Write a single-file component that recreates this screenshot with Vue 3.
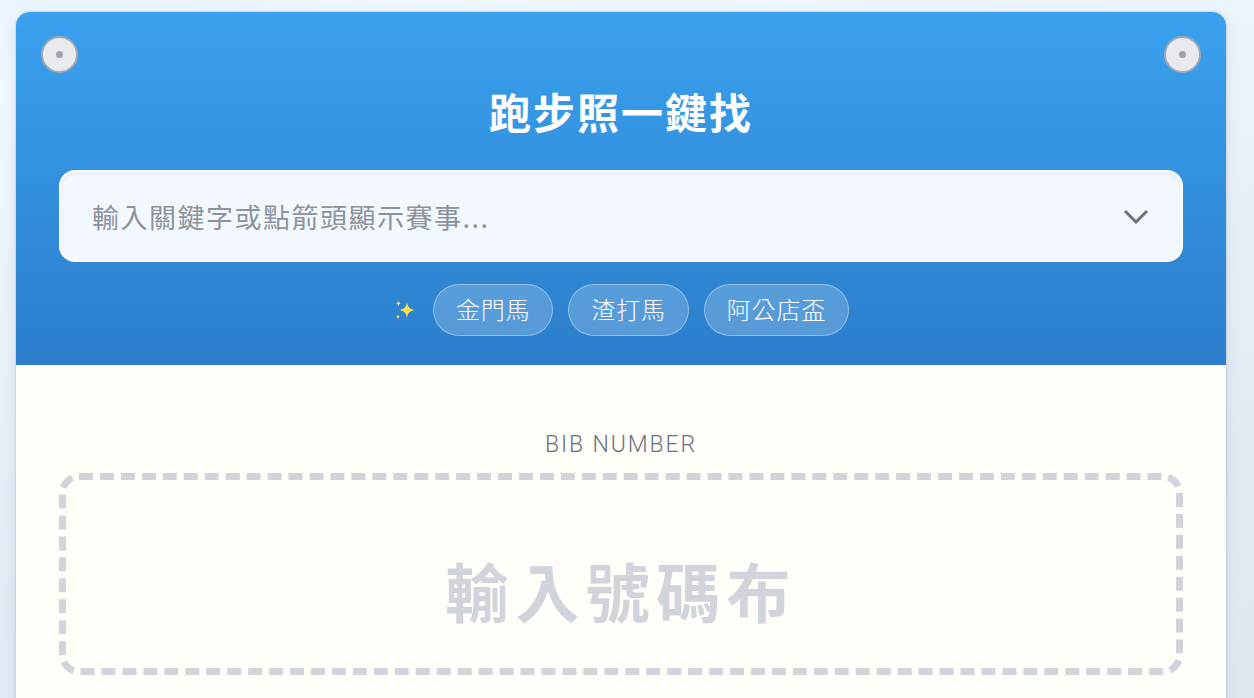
<template>
  <div class="page">
    <div class="card">
      <header class="head">
        <div class="holes">
          <span class="hole"><i></i></span>
          <span class="hole"><i></i></span>
        </div>
        <h1 class="title">跑步照一鍵找</h1>
        <div class="search">
          <input class="search-input" type="text" placeholder="輸入關鍵字或點箭頭顯示賽事..." />
          <svg class="chevron" width="26" height="16" viewBox="0 0 26 16" fill="none">
            <path d="M2 3l11 11L24 3" stroke="#6b7280" stroke-width="3" />
          </svg>
        </div>
        <div class="quick">
          <svg class="spark" width="24" height="24" viewBox="-1 0 24 24">
            <path d="M14 4c.8 5 2.500 7 7.500 8-5 1-6.700 3-7.500 8-.8-5-2.500-7-7.500-8 5-1 6.700-3 7.500-8z" fill="#fde047" />
            <path d="M5.500 2.500c.3 2 .9 2.700 2.500 3-1.600.3-2.200 1-2.500 3-.3-2-.9-2.700-2.500-3 1.600-.3 2.200-1 2.500-3z" fill="#fef3c7" />
            <path d="M5 16c.3 1.800.8 2.400 2.300 2.700-1.500.3-2 .9-2.300 2.700-.3-1.800-.8-2.400-2.300-2.700 1.500-.3 2-.9 2.300-2.700z" fill="#fde047" />
          </svg>
          <button v-for="tag in tags" :key="tag" class="pill">{{ tag }}</button>
        </div>
      </header>
      <section class="body">
        <div class="bib-label">BIB NUMBER</div>
        <div class="bib-box">輸入號碼布</div>
      </section>
    </div>
  </div>
</template>

<script setup>
const tags = ['金門馬', '渣打馬', '阿公店盃']
</script>

<style>
html, body {
  margin: 0;
  height: 100%;
  overflow: hidden;
}
</style>

<style scoped>
.page {
  height: 698px;
  box-sizing: border-box;
  padding: 12px 28px 0 16px;
  overflow: hidden;
  background: linear-gradient(170deg, #eaf5ff 0%, #f0f7fe 10%, #e2eaf3 70%, #dfe7f0 100%);
  font-family: "Noto Sans CJK TC", "Noto Sans", sans-serif;
}

.card {
  height: 800px;
  border-radius: 14px;
  overflow: hidden;
  background: #fffef9;
  box-shadow: 0 0 2px rgba(90, 110, 140, 0.45), 0 4px 14px rgba(110, 135, 165, 0.18);
}

.head {
  position: relative;
  height: 353px;
  box-sizing: border-box;
  padding: 0 43px;
  background: linear-gradient(180deg, #3aa1ee 0%, #2b7ecb 100%);
}

.holes {
  position: absolute;
  top: 24px;
  left: 25px;
  right: 25px;
  display: flex;
  justify-content: space-between;
}

.hole {
  width: 37px;
  height: 37px;
  box-sizing: border-box;
  border: 2px solid #a3a8b0;
  border-radius: 50%;
  background: #e8eaee;
  display: flex;
  align-items: center;
  justify-content: center;
}

.hole i {
  width: 7px;
  height: 7px;
  border-radius: 50%;
  background: #9ca3af;
}

.title {
  margin: 0;
  padding-top: 70px;
  height: 158px;
  box-sizing: border-box;
  line-height: 58px;
  font-size: 42px;
  font-weight: 700;
  letter-spacing: 2px;
  color: #fff;
  text-align: center;
}

.search {
  height: 92px;
  box-sizing: border-box;
  display: flex;
  align-items: center;
  padding: 0 32px 0 31px;
  border: 2px solid #fff;
  border-radius: 16px;
  background: #f3f8ff;
  box-shadow: inset 0 2px 4px rgba(0, 0, 0, 0.06);
}

.search-input {
  flex: 1;
  border: none;
  outline: none;
  background: transparent;
  padding: 0;
  font-family: inherit;
  font-size: 27px;
  font-weight: 400;
  letter-spacing: 1.500px;
  color: #374151;
}

.search-input::placeholder {
  color: #8d939d;
  opacity: 1;
}

.quick {
  display: flex;
  align-items: center;
  justify-content: center;
  gap: 15px;
  margin-top: 22px;
  padding-right: 1px;
}

.spark {
  margin-right: 2px;
}

.pill {
  height: 52px;
  box-sizing: border-box;
  padding: 0 22px 4px;
  border: 1px solid rgba(255, 255, 255, 0.35);
  border-radius: 26px;
  background: rgba(255, 255, 255, 0.2);
  font-family: inherit;
  font-size: 24px;
  font-weight: 300;
  letter-spacing: 0.800px;
  color: #fff;
}

.body {
  padding: 60px 43px 0;
}

.bib-label {
  height: 48px;
  line-height: 40px;
  font-family: Roboto, sans-serif;
  font-size: 23px;
  font-weight: 300;
  letter-spacing: 1.900px;
  color: #6b7280;
  text-align: center;
}

.bib-box {
  height: 202px;
  box-sizing: border-box;
  padding-top: 30px;
  border: 7px dashed #d1d5db;
  border-radius: 20px;
  display: flex;
  align-items: center;
  justify-content: center;
  font-size: 64px;
  font-weight: 600;
  letter-spacing: 6.400px;
  color: #d1d5db;
}
</style>
